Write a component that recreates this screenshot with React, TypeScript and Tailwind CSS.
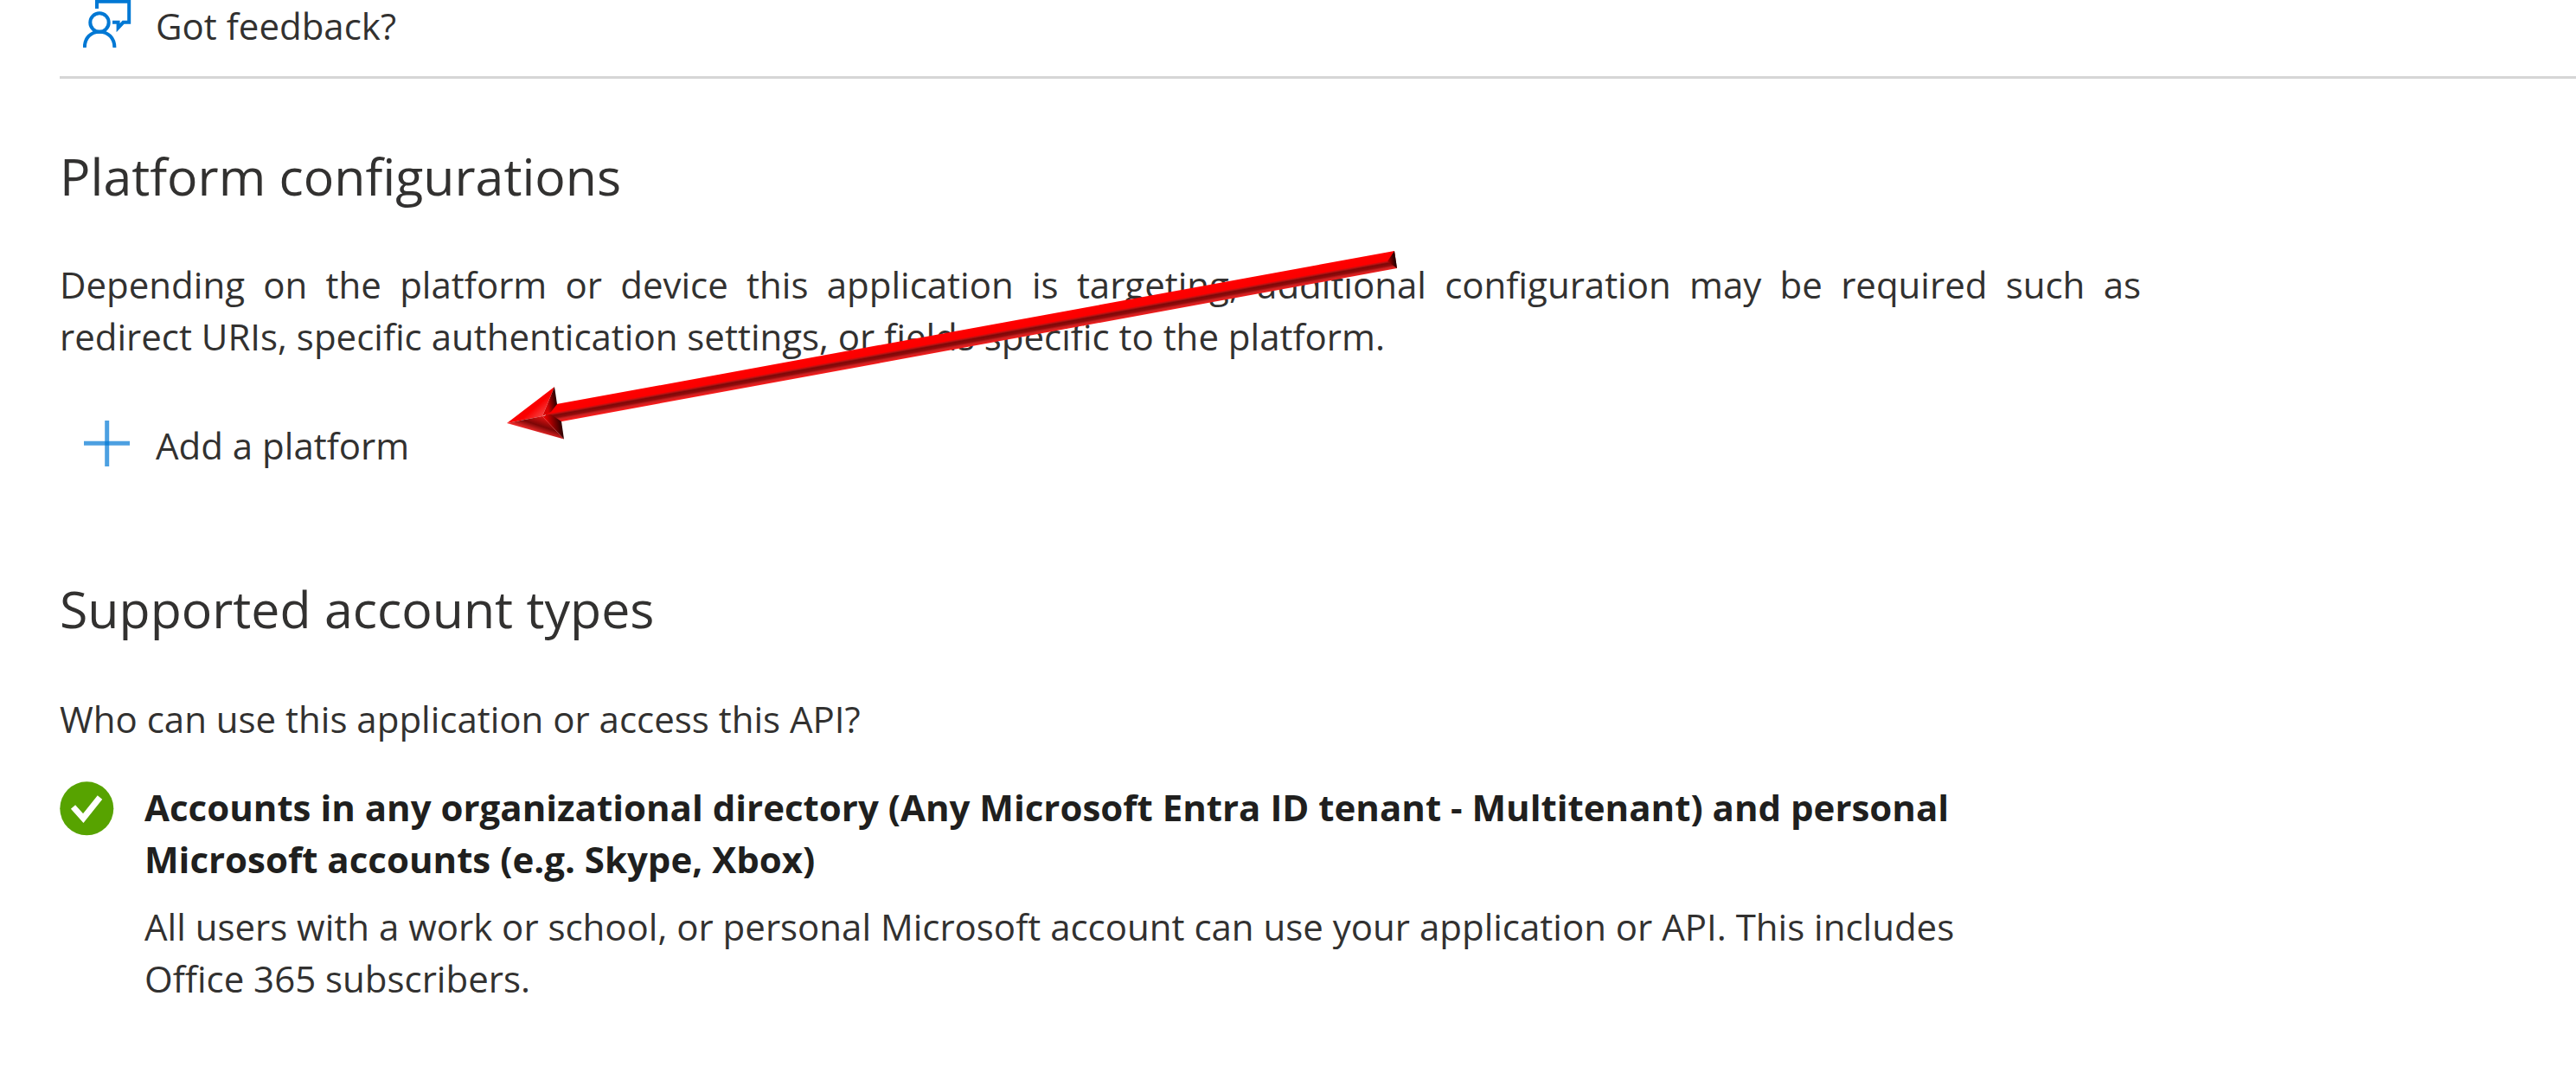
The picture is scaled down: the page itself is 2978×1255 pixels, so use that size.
function FeedbackIcon() {
  return (
    <svg viewBox="0 0 58 60" className="h-[60px] w-[58px] shrink-0" fill="none" stroke="#0078d4" strokeWidth="4" aria-hidden="true">
      <circle cx="19" cy="26" r="10.7" />
      <path d="M1.8 55C1.8 44 9 36.7 19 36.7S36.4 44 36.4 55" />
      <path d="M16 10V1.8H53.2V25.8H46.5L40.6 32.2V25.8H34" />
    </svg>
  );
}

function PlusIcon() {
  return (
    <svg viewBox="0 0 58 60" className="h-[60px] w-[58px] shrink-0" fill="none" stroke="#0078d4" strokeOpacity="0.7" strokeWidth="5" aria-hidden="true">
      <path d="M1 27.3H54" />
      <path d="M27.7 1V54" />
    </svg>
  );
}

function CheckIcon() {
  return (
    <svg viewBox="0 0 64 64" className="size-16 shrink-0" role="img" aria-label="Selected">
      <circle cx="31.3" cy="31.3" r="31" fill="#57a300" />
      <path d="M15.5 29.5L27.3 42.5L46.5 18.5" fill="none" stroke="#fff" strokeWidth="7" />
    </svg>
  );
}

function Arrow() {
  return (
    <svg viewBox="0 0 1040 230" className="pointer-events-none absolute top-[284px] left-[580px] w-[1040px]" aria-hidden="true">
      <defs>
        <linearGradient id="shaft" gradientUnits="userSpaceOnUse" x1="548" y1="94.5" x2="551.7" y2="114.8">
          <stop offset="0" stopColor="#ff0000" />
          <stop offset="0.44" stopColor="#fb0000" />
          <stop offset="0.52" stopColor="#b81212" />
          <stop offset="0.6" stopColor="#7c0808" />
          <stop offset="0.74" stopColor="#920b0b" />
          <stop offset="0.84" stopColor="#c82020" />
          <stop offset="1" stopColor="#ff1a1a" />
        </linearGradient>
        <linearGradient id="barbTop" gradientUnits="userSpaceOnUse" x1="32" y1="184" x2="46" y2="200">
          <stop offset="0.3" stopColor="#fa0000" />
          <stop offset="1" stopColor="#f44a4a" />
        </linearGradient>
        <linearGradient id="barbLow" gradientUnits="userSpaceOnUse" x1="44" y1="198" x2="38" y2="216">
          <stop offset="0" stopColor="#d01010" />
          <stop offset="0.5" stopColor="#7c0606" />
          <stop offset="1" stopColor="#ff3030" />
        </linearGradient>
        <linearGradient id="backTop" gradientUnits="userSpaceOnUse" x1="52" y1="182" x2="65" y2="180">
          <stop offset="0" stopColor="#d80000" />
          <stop offset="1" stopColor="#100000" />
        </linearGradient>
        <linearGradient id="backLow" gradientUnits="userSpaceOnUse" x1="52" y1="207" x2="71" y2="204">
          <stop offset="0" stopColor="#e00000" />
          <stop offset="1" stopColor="#180000" />
        </linearGradient>
        <linearGradient id="tail" gradientUnits="userSpaceOnUse" x1="1023" y1="17" x2="1034" y2="15">
          <stop offset="0" stopColor="#c00000" />
          <stop offset="1" stopColor="#0c0000" />
        </linearGradient>
      </defs>
      <path d="M55 184.6L1032 6L1035 26L56 205.4L50 197Z" fill="url(#shaft)" />
      <path d="M1032 6L1035 26L1024 18Z" fill="url(#tail)" />
      <path d="M6 205L61 163L47 197Z" fill="url(#barbTop)" />
      <path d="M6 205L47 197L72 223.5Z" fill="url(#barbLow)" />
      <path d="M61 163L64 183L57 192L47 197Z" fill="url(#backTop)" />
      <path d="M47 197L57 195L69 203L72 223.5Z" fill="url(#backLow)" />
    </svg>
  );
}

export default function App() {
  return (
    <div className="relative min-h-screen overflow-hidden bg-white pl-[69px] font-['Open_Sans','Noto_Sans',sans-serif] text-[42px] leading-[60px] text-[#323130]">
      <header className="border-b-3 border-[#d6d6d6] pb-7 pl-[27px]">
        <button type="button" className="flex items-center gap-[26px]">
          <FeedbackIcon />
          Got feedback?
        </button>
      </header>

      <main className="max-w-[2406px]">
        <section>
          <h1 className="mt-[72px] text-[59px] leading-[80px]">Platform configurations</h1>
          <p className="mt-14 text-justify">
            Depending on the platform or device this application is targeting, additional configuration may be required such as
            redirect&nbsp;URIs, specific authentication settings, or fields specific to the platform.
          </p>
          <button type="button" className="mt-[66px] ml-[27px] flex items-center gap-[26px]">
            <PlusIcon />
            Add a platform
          </button>
        </section>

        <section className="mt-[118px]">
          <h2 className="text-[59px] leading-[80px]">Supported account types</h2>
          <p className="mt-[58px]">Who can use this application or access this API?</p>
          <div className="mt-[42px] flex max-w-[2240px] items-start gap-[34px]">
            <CheckIcon />
            <div className="flex-1">
              <p className="font-bold text-[#201f1e]">
                Accounts in any organizational directory (Any Microsoft Entra ID tenant - Multitenant) and personal Microsoft
                accounts (e.g. Skype, Xbox)
              </p>
              <p className="mt-[18px]">
                All users with a work or school, or personal Microsoft account can use your application or API. This includes
                Office 365 subscribers.
              </p>
            </div>
          </div>
        </section>
      </main>

      <Arrow />
    </div>
  );
}
